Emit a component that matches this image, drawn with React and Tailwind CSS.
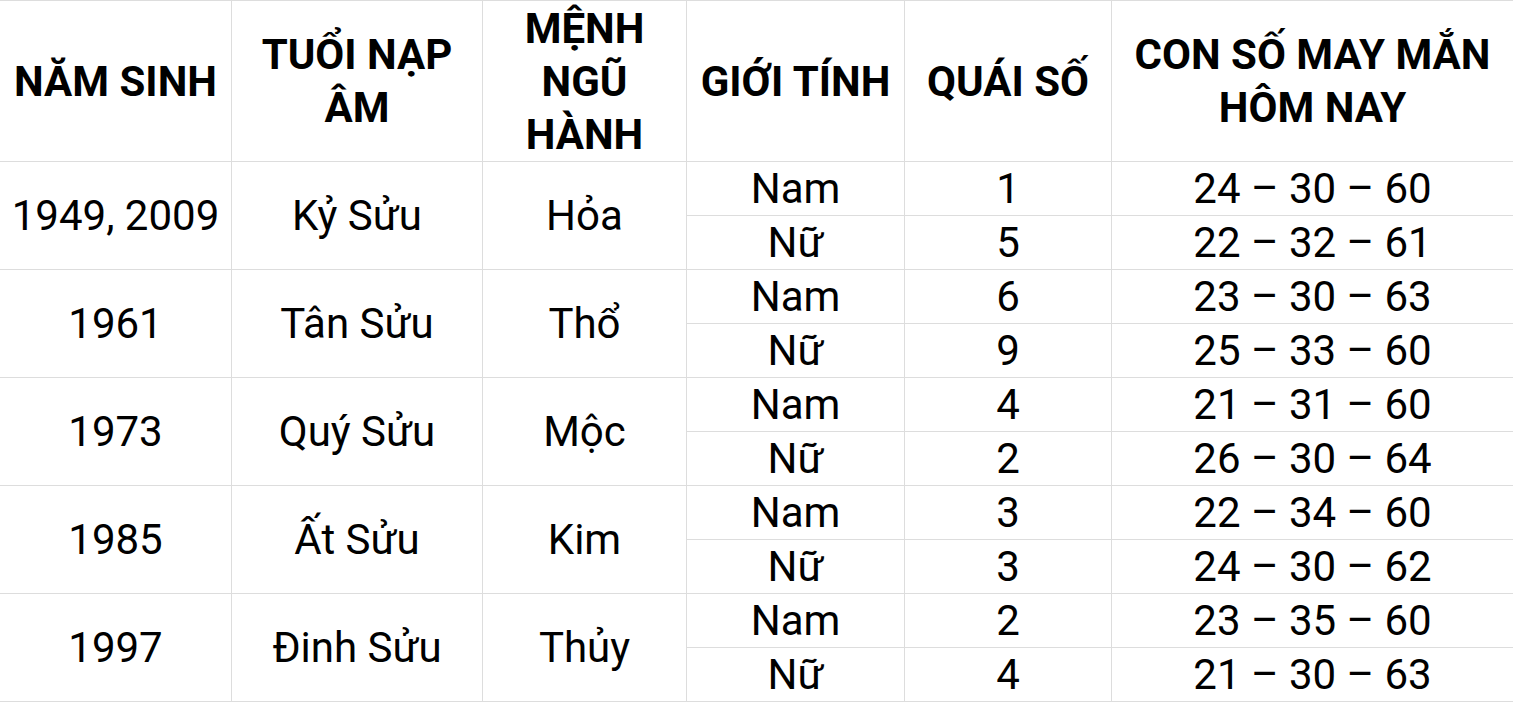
import React from 'react';

const rows = [
  { nam: '1949, 2009', tuoi: 'Kỷ Sửu', menh: 'Hỏa', sub: [['Nam', '1', '24 – 30 – 60'], ['Nữ', '5', '22 – 32 – 61']] },
  { nam: '1961', tuoi: 'Tân Sửu', menh: 'Thổ', sub: [['Nam', '6', '23 – 30 – 63'], ['Nữ', '9', '25 – 33 – 60']] },
  { nam: '1973', tuoi: 'Quý Sửu', menh: 'Mộc', sub: [['Nam', '4', '21 – 31 – 60'], ['Nữ', '2', '26 – 30 – 64']] },
  { nam: '1985', tuoi: 'Ất Sửu', menh: 'Kim', sub: [['Nam', '3', '22 – 34 – 60'], ['Nữ', '3', '24 – 30 – 62']] },
  { nam: '1997', tuoi: 'Đinh Sửu', menh: 'Thủy', sub: [['Nam', '2', '23 – 35 – 60'], ['Nữ', '4', '21 – 30 – 63']] },
];

const headers = ['NĂM SINH', 'TUỔI NẠP ÂM', 'MỆNH NGŨ HÀNH', 'GIỚI TÍNH', 'QUÁI SỐ', 'CON SỐ MAY MẮN HÔM NAY'];

export default function App() {
  return (
    <div className="w-[1513px] h-[702px] bg-white text-black font-['Roboto',sans-serif]">
      <div className="grid grid-cols-[231px_250px_203px_217px_206px_401px] grid-rows-[160px_repeat(10,53px)] gap-px bg-[#dddddd] border-y border-[#dddddd]">
        {headers.map((h) => (
          <div key={h} className="bg-white flex items-center justify-center text-center text-[42px] leading-[53px] font-bold px-2">
            {h}
          </div>
        ))}
        {rows.map((r, i) => (
          <React.Fragment key={r.nam}>
            {[r.nam, r.tuoi, r.menh].map((v, c) => (
              <div
                key={c}
                className="row-span-2 bg-white flex items-center justify-center text-[42px]"
                style={{ gridRow: `${i * 2 + 2} / span 2`, gridColumn: c + 1 }}
              >
                {v}
              </div>
            ))}
            {r.sub.map((s, j) =>
              s.map((v, c) => (
                <div
                  key={`${j}-${c}`}
                  className="bg-white flex items-center justify-center text-[42px] leading-none"
                  style={{ gridRow: i * 2 + 2 + j, gridColumn: c + 4 }}
                >
                  {v}
                </div>
              ))
            )}
          </React.Fragment>
        ))}
      </div>
    </div>
  );
}
